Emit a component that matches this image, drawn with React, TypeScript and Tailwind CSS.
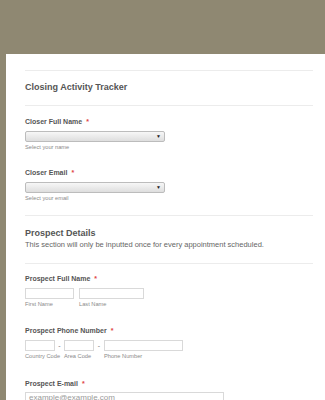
import React from 'react';

const font = { fontFamily: '"Liberation Sans", Arial, sans-serif' };

const Label: React.FC<{ text: string; className?: string }> = ({ text, className }) => (
    <div className={'text-[7px] leading-[10px] font-bold text-[#555555] ' + (className ?? '')}>
        {text} <span className="text-[#e04444] ml-[2px]">*</span>
    </div>
);

const Select: React.FC = () => (
    <div className="mt-[4px] w-[140px] h-[11px] rounded-[2px] border border-[#bcbcbc] bg-gradient-to-b from-[#f7f7f7] to-[#dedede] flex items-center justify-end pr-[3px]">
        <span className="text-[5px] leading-none text-[#222]">▼</span>
    </div>
);

const Helper: React.FC<{ text: string; className?: string }> = ({ text, className }) => (
    <div className={'text-[5.7px] leading-[8px] text-[#8a8a8a] whitespace-nowrap ' + (className ?? '')}>{text}</div>
);

const Box: React.FC<{ w: string; label: string }> = ({ w, label }) => (
    <div className={'flex flex-col shrink-0 ' + w}>
        <div className="h-[11px] w-full border border-[#d9d9d9] bg-white" />
        <Helper text={label} className="mt-[1px]" />
    </div>
);

const Dash: React.FC<{ w: string }> = ({ w }) => (
    <span className={'shrink-0 text-center text-[7px] leading-[11px] text-[#777] ' + w}>-</span>
);

export default function App() {
    return (
        <div className="min-h-[400px] bg-[#8f8872] pt-[54px] pl-[6px] overflow-hidden antialiased" style={font}>
            <div className="bg-white h-[346px] pt-[16px] pl-[19px] pr-[12px]">
                <div className="h-px bg-[#ececec]" />
                <div className="h-[34px] flex items-center text-[9px] font-bold text-[#555555]">Closing Activity Tracker</div>
                <div className="h-px bg-[#ececec]" />

                <Label text="Closer Full Name" className="mt-[11px]" />
                <Select />
                <Helper text="Select your name" className="mt-[1px]" />

                <Label text="Closer Email" className="mt-[17px]" />
                <Select />
                <Helper text="Select your email" className="mt-[1px]" />

                <div className="h-px bg-[#ececec] mt-[13px]" />
                <div className="mt-[10px] text-[9px] leading-[14px] font-bold text-[#555555]">Prospect Details</div>
                <div className="text-[7.5px] leading-[10px] text-[#666666]">This section will only be inputted once for every appointment scheduled.</div>
                <div className="h-px bg-[#ececec] mt-[13px]" />

                <Label text="Prospect Full Name" className="mt-[10px]" />
                <div className="mt-[4px] flex gap-[5px]">
                    <Box w="w-[49px]" label="First Name" />
                    <Box w="w-[65px]" label="Last Name" />
                </div>

                <Label text="Prospect Phone Number" className="mt-[18px]" />
                <div className="mt-[4px] flex items-start">
                    <Box w="w-[30px]" label="Country Code" />
                    <Dash w="w-[9px]" />
                    <Box w="w-[30px]" label="Area Code" />
                    <Dash w="w-[10px]" />
                    <Box w="w-[79px]" label="Phone Number" />
                </div>

                <Label text="Prospect E-mail" className="mt-[19px]" />
                <div className="mt-[3px] w-[199px] h-[16px] border border-[#d9d9d9] pl-[3px] text-[8px] leading-[9px] text-[#9a9a9a]">example@example.com</div>
            </div>
        </div>
    );
}
